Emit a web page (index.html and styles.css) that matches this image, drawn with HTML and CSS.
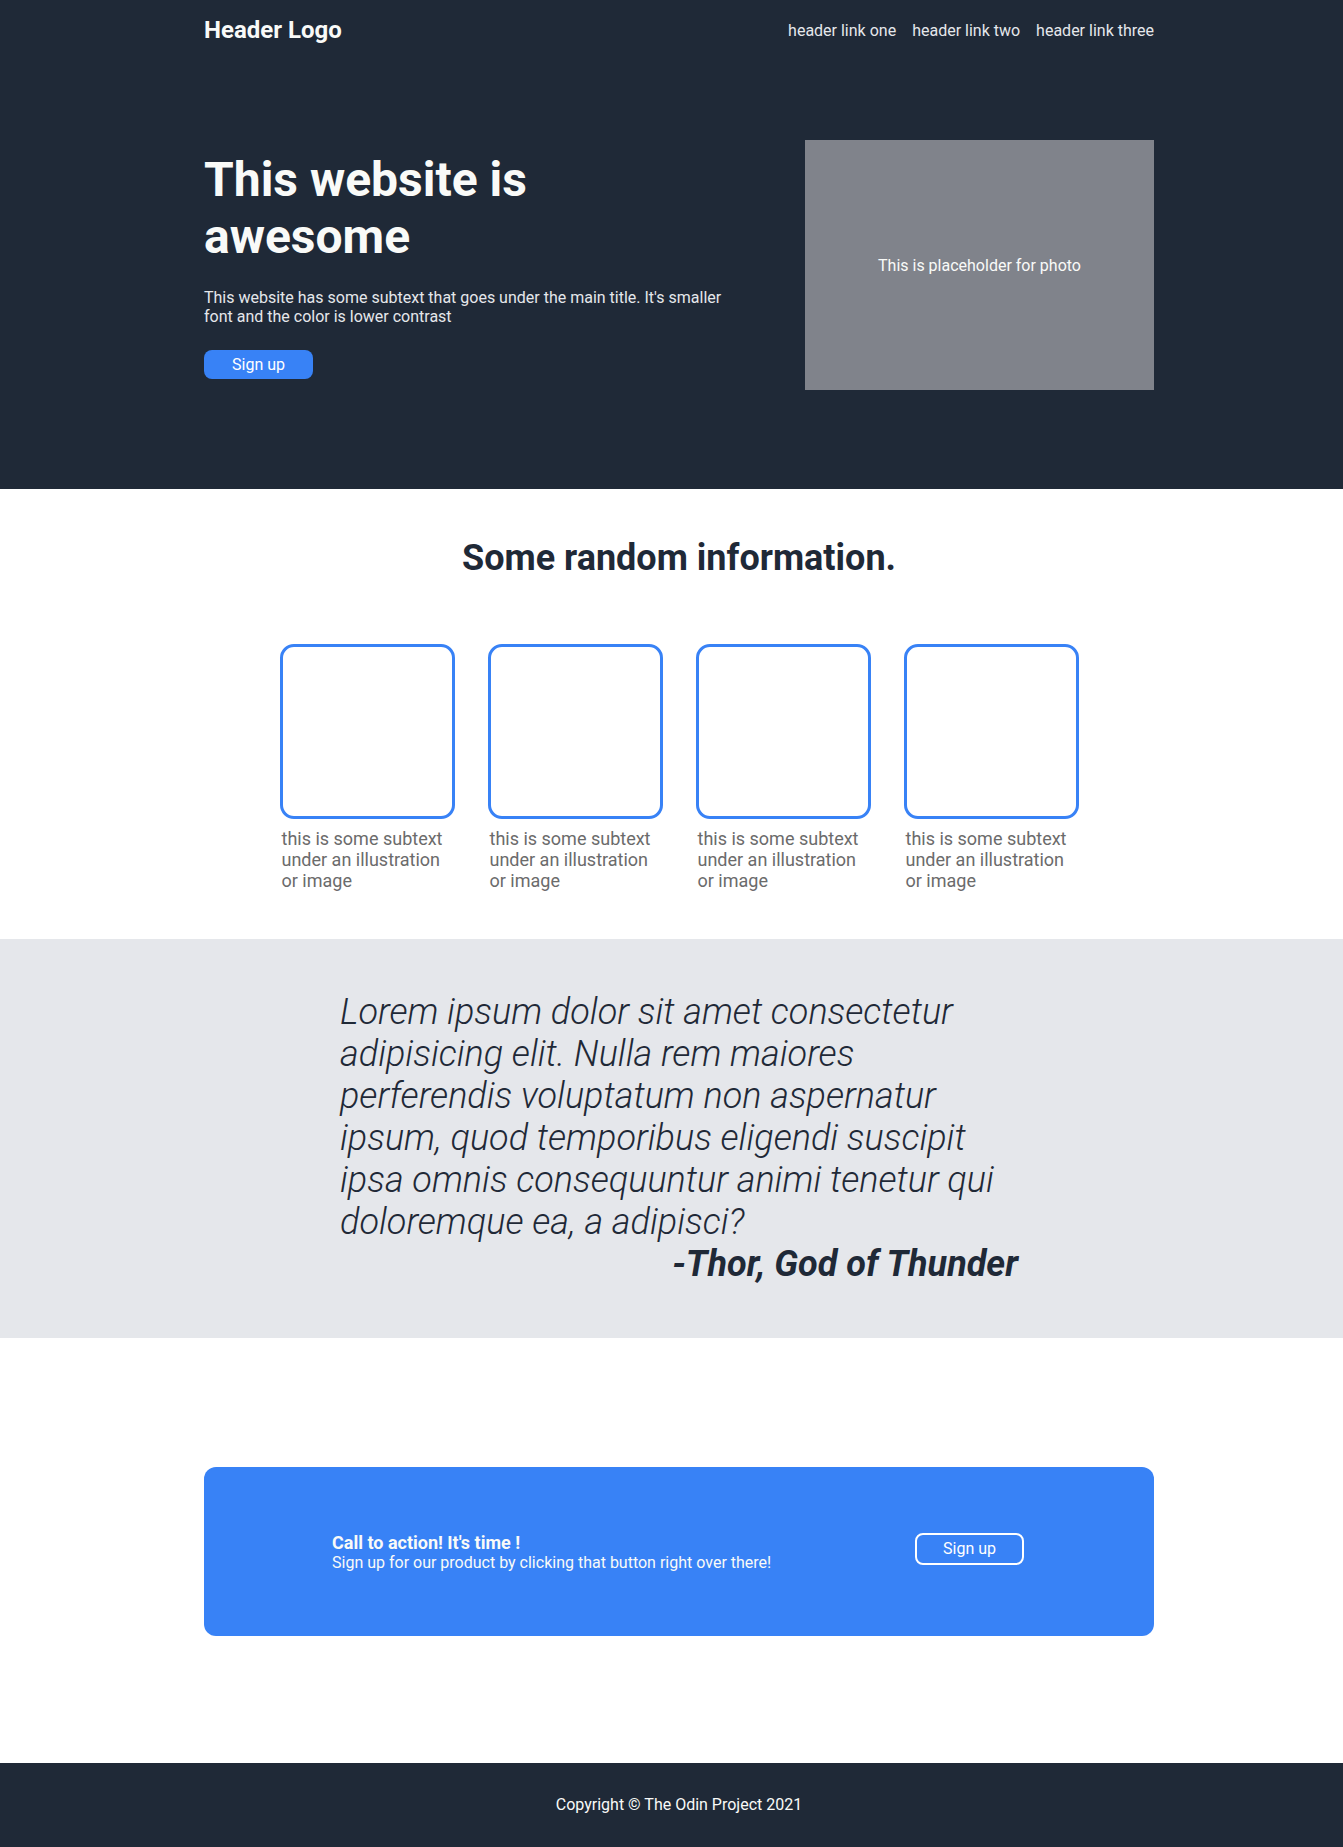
FILE: index.html
```html
<!DOCTYPE html>
<html lang="en">
<head>
<meta charset="utf-8">
<title>Landing page</title>
<link rel="stylesheet" href="styles.css">
</head>
<body>
<div class="hero-band">
  <header class="container header">
    <div class="logo">Header Logo</div>
    <nav class="links">
      <a href="#">header link one</a>
      <a href="#">header link two</a>
      <a href="#">header link three</a>
    </nav>
  </header>
  <section class="container hero">
    <div class="hero-text">
      <h1 class="hero-title">This website is awesome</h1>
      <p class="hero-sub">This website has some subtext that goes under the main title. It's smaller font and the color is lower contrast</p>
      <button class="btn-solid">Sign up</button>
    </div>
    <div class="photo">This is placeholder for photo</div>
  </section>
</div>

<section class="container info">
  <h2 class="info-title">Some random information.</h2>
  <div class="cards">
    <div class="card"><div class="card-box"></div><p class="card-text">this is some subtext under an illustration or image</p></div>
    <div class="card"><div class="card-box"></div><p class="card-text">this is some subtext under an illustration or image</p></div>
    <div class="card"><div class="card-box"></div><p class="card-text">this is some subtext under an illustration or image</p></div>
    <div class="card"><div class="card-box"></div><p class="card-text">this is some subtext under an illustration or image</p></div>
  </div>
</section>

<section class="quote-band">
  <div class="container">
    <blockquote class="quote">
      <p class="quote-text">Lorem ipsum dolor sit amet consectetur adipisicing elit. Nulla rem maiores perferendis voluptatum non aspernatur ipsum, quod temporibus eligendi suscipit ipsa omnis consequuntur animi tenetur qui doloremque ea, a adipisci?</p>
      <p class="quote-author">-Thor, God of Thunder</p>
    </blockquote>
  </div>
</section>

<section class="container cta-wrap">
  <div class="cta">
    <div class="cta-text">
      <div class="cta-title">Call to action! It's time !</div>
      <div class="cta-sub">Sign up for our product by clicking that button right over there!</div>
    </div>
    <button class="btn-outline">Sign up</button>
  </div>
</section>

<footer class="footer">
  <div class="container footer-inner">Copyright © The Odin Project 2021</div>
</footer>
</body>
</html>
```

FILE: styles.css
```css
* { box-sizing: border-box; }

body {
  margin: 0;
  font-family: Roboto, "Liberation Sans", sans-serif;
  font-size: 16px;
  line-height: normal;
  background: #ffffff;
}

.container {
  width: 950px;
  margin-left: 204px;
}

.hero-band {
  background: #1f2937;
  padding-bottom: 99px;
}

.header {
  display: flex;
  justify-content: space-between;
  align-items: center;
  padding: 16px 0;
}

.logo {
  font-size: 24px;
  font-weight: 700;
  color: #f9faf8;
}

.links {
  display: flex;
  gap: 16px;
}

.links a {
  color: #e5e7eb;
  text-decoration: none;
  font-size: 16px;
}

.hero {
  display: flex;
  justify-content: space-between;
  align-items: center;
  padding-top: 80px;
}

.hero-text {
  width: 530px;
}

.hero-title {
  margin: 0 0 23px;
  font-size: 48px;
  font-weight: 700;
  line-height: normal;
  color: #f9faf8;
}

.hero-sub {
  margin: 0 0 24px;
  font-size: 16px;
  color: #e5e7eb;
}

.btn-solid {
  display: block;
  font-family: inherit;
  font-size: 16px;
  line-height: normal;
  white-space: nowrap;
  color: #ffffff;
  background: #3882f6;
  border: 0;
  border-radius: 8px;
  padding: 5px 28px;
}

.photo {
  width: 349px;
  height: 250px;
  background: #80838b;
  color: #f9faf8;
  font-size: 16px;
  display: flex;
  align-items: center;
  justify-content: center;
}

.info {
  padding: 48px 0;
}

.info-title {
  margin: 0;
  text-align: center;
  font-size: 36px;
  font-weight: 700;
  line-height: normal;
  color: #1f2937;
}

.cards {
  display: flex;
  justify-content: center;
  gap: 33px;
  margin-top: 65px;
}

.card {
  width: 175px;
}

.card-box {
  width: 175px;
  height: 175px;
  border: 3px solid #3882f6;
  border-radius: 14px;
}

.card-text {
  margin: 9px 0 0;
  padding-left: 2px;
  font-size: 18px;
  color: #6b6b6b;
}

.quote-band {
  background: #e5e7eb;
  padding: 52px 0 53px;
}

.quote {
  margin: 0 auto;
  width: 678px;
  color: #1f2937;
}

.quote-text {
  margin: 0;
  font-size: 36px;
  font-weight: 300;
  font-style: italic;
}

.quote-author {
  margin: 0;
  text-align: right;
  font-size: 36px;
  font-weight: 700;
  font-style: italic;
}

.cta-wrap {
  padding: 129px 0 127px;
}

.cta {
  background: #3882f6;
  border-radius: 12px;
  height: 169px;
  padding: 0 130px 0 128px;
  display: flex;
  justify-content: space-between;
  align-items: center;
  color: #f9faf8;
}

.cta-title {
  font-size: 18px;
  font-weight: 700;
}

.cta-sub {
  font-size: 16px;
}

.btn-outline {
  font-family: inherit;
  font-size: 16px;
  line-height: normal;
  white-space: nowrap;
  color: #ffffff;
  background: transparent;
  border: 2px solid #ffffff;
  border-radius: 8px;
  width: 109px;
  height: 32px;
  padding: 0;
  margin-bottom: 6px;
}

.footer {
  background: #1f2937;
  color: #f9faf8;
  font-size: 16px;
  padding: 32px 0;
  height: 84px;
}

.footer-inner {
  text-align: center;
}
```
